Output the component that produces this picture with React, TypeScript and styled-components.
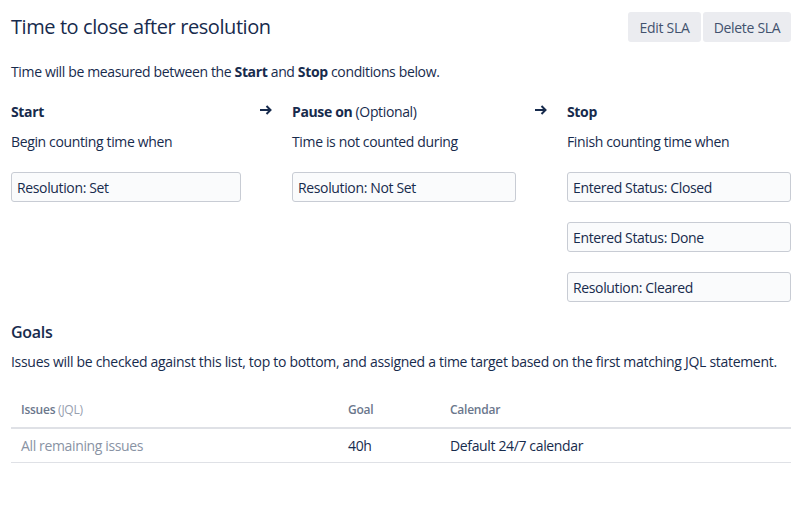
import React from "react";
import styled, { createGlobalStyle } from "styled-components";

const Global = createGlobalStyle`
  html, body { margin: 0; padding: 0; background: #fff; }
  body {
    font-family: "Open Sans", "Noto Sans", "Liberation Sans", sans-serif;
    color: #172B4D;
    font-size: 14px;
  }
`;

const Page = styled.div`
  padding: 12px 12px 0 11px;
`;

const Header = styled.div`
  display: flex;
  justify-content: space-between;
  align-items: center;
  height: 30px;
`;

const Title = styled.h1`
  margin: 0;
  font-size: 20px;
  font-weight: 500;
  line-height: 30px;
  letter-spacing: -0.42px;
  color: #172B4D;
`;

const ButtonGroup = styled.div`
  display: flex;
  gap: 2px;
`;

const Button = styled.button<{ $w: number }>`
  width: ${(p) => p.$w}px;
  height: 30px;
  border: none;
  border-radius: 3px;
  background: #EBECF0;
  color: #42526E;
  font-family: inherit;
  font-size: 14px;
  letter-spacing: -0.3px;
  padding: 0;
  cursor: pointer;
`;

const Text = styled.p<{ $mt: number; $ls?: number }>`
  margin: ${(p) => p.$mt}px 0 0;
  line-height: 20px;
  font-size: 14px;
  letter-spacing: ${(p) => p.$ls ?? -0.36}px;
`;

const Conditions = styled.div`
  display: grid;
  grid-template-columns: 230px 51px 224px 51px 1fr;
  margin-top: 20px;
`;

const Column = styled.div`
  display: flex;
  flex-direction: column;
`;

const ColTitle = styled.div`
  line-height: 20px;
  font-size: 14px;
  letter-spacing: -0.36px;
  b { font-weight: 700; }
`;

const ColSub = styled.div`
  margin-top: 10px;
  line-height: 20px;
  letter-spacing: -0.36px;
  margin-bottom: 20px;
`;

const Arrow = styled.div`
  padding-left: 19px;
  height: 20px;
  display: flex;
  align-items: flex-start;
  svg { margin-top: 2px; }
`;

const BoxList = styled.div`
  display: flex;
  flex-direction: column;
  gap: 20px;
`;

const CondBox = styled.div`
  box-sizing: border-box;
  height: 30px;
  border: 1px solid #C8CCD4;
  border-radius: 3px;
  background: #FAFBFC;
  padding: 0 5px;
  display: flex;
  align-items: center;
  font-size: 14px;
  letter-spacing: -0.36px;
`;

const SectionTitle = styled.h2`
  margin: 18px 0 0;
  font-size: 16px;
  font-weight: 600;
  line-height: 24px;
  letter-spacing: -0.3px;
`;

const Table = styled.table`
  margin-top: 21px;
  width: 780px;
  border-collapse: collapse;
  table-layout: fixed;
`;

const Th = styled.th<{ $w?: number }>`
  ${(p) => (p.$w ? `width: ${p.$w}px;` : "")}
  text-align: left;
  padding: 8px 10px;
  line-height: 18px;
  font-size: 12px;
  font-weight: 600;
  color: #6B778C;
  border-bottom: 2px solid #DFE1E6;
  letter-spacing: -0.25px;
  span { font-weight: 400; color: #97A0AF; }
`;

const Td = styled.td<{ $muted?: boolean }>`
  padding: 7px 10px;
  line-height: 19px;
  font-size: 14px;
  color: ${(p) => (p.$muted ? "#8993A4" : "#172B4D")};
  border-bottom: 1px solid #DFE1E6;
  letter-spacing: -0.36px;
`;

const ArrowIcon = () => (
  <svg width="12" height="12" viewBox="0 0 12 12">
    <path d="M0 6h10.5M6.5 2L10.5 6 6.5 10" stroke="#172B4D" strokeWidth="2" fill="none" />
  </svg>
);

export default function App() {
  return (
    <Page>
      <Global />
      <Header>
        <Title>Time to close after resolution</Title>
        <ButtonGroup>
          <Button $w={73}>Edit SLA</Button>
          <Button $w={88}>Delete SLA</Button>
        </ButtonGroup>
      </Header>
      <Text $mt={20}>
        Time will be measured between the <b>Start</b> and <b>Stop</b> conditions below.
      </Text>
      <Conditions>
        <Column>
          <ColTitle><b>Start</b></ColTitle>
          <ColSub>Begin counting time when</ColSub>
          <BoxList>
            <CondBox>Resolution: Set</CondBox>
          </BoxList>
        </Column>
        <Arrow><ArrowIcon /></Arrow>
        <Column>
          <ColTitle><b>Pause on</b> (Optional)</ColTitle>
          <ColSub>Time is not counted during</ColSub>
          <BoxList>
            <CondBox>Resolution: Not Set</CondBox>
          </BoxList>
        </Column>
        <Arrow><ArrowIcon /></Arrow>
        <Column>
          <ColTitle><b>Stop</b></ColTitle>
          <ColSub>Finish counting time when</ColSub>
          <BoxList>
            <CondBox>Entered Status: Closed</CondBox>
            <CondBox>Entered Status: Done</CondBox>
            <CondBox>Resolution: Cleared</CondBox>
          </BoxList>
        </Column>
      </Conditions>
      <SectionTitle>Goals</SectionTitle>
      <Text $mt={8} $ls={-0.3}>
        Issues will be checked against this list, top to bottom, and assigned a time target based on the first matching JQL statement.
      </Text>
      <Table>
        <thead>
          <tr>
            <Th $w={307}>Issues <span>(JQL)</span></Th>
            <Th $w={82}>Goal</Th>
            <Th>Calendar</Th>
          </tr>
        </thead>
        <tbody>
          <tr>
            <Td $muted>All remaining issues</Td>
            <Td>40h</Td>
            <Td>Default 24/7 calendar</Td>
          </tr>
        </tbody>
      </Table>
    </Page>
  );
}
